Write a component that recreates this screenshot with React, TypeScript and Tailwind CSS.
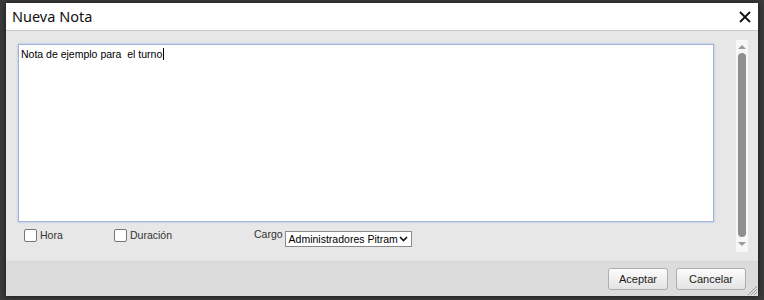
import React from "react";

const font = { fontFamily: "'Liberation Sans', Arial, sans-serif" };

export default function App() {
  return (
    <div className="w-[764px] h-[300px] bg-[#3b3b3b] pt-[3px] pl-[6px] pr-[6px] pb-[4px]">
      <div className="relative flex h-full w-full flex-col shadow-[0_0_6px_rgba(0,0,0,0.6)]">
        {/* Title bar */}
        <div className="flex h-[28px] items-center justify-between border-b border-[#c9c9c9] bg-white pl-[6px] pr-[6px]">
          <span className="text-[14.5px] text-[#111]" style={{ fontFamily: "'Noto Sans', 'Open Sans', sans-serif" }}>
            Nueva Nota
          </span>
          <svg width="12" height="12" viewBox="0 0 12 12" className="mr-[1px]">
            <path d="M1 1 L11 11 M11 1 L1 11" stroke="#111" strokeWidth="1.8" />
          </svg>
        </div>

        {/* Body */}
        <div className="flex flex-1 bg-[#e7e7e7]">
          <div className="flex-1 pl-[12px] pt-[13px]">
            <div
              className="h-[178px] w-[696px] border border-[#9fb3dd] bg-white px-[2px] pt-[3px] text-[10.5px] leading-[13px] text-black shadow-[0_0_2px_rgba(120,150,220,0.6)]"
              style={font}
            >
              <span>Nota de ejemplo para&nbsp; el turno</span>
              <span className="ml-[1px] inline-block h-[12px] w-px bg-black align-[-2px]" />
            </div>
            <div className="mt-[6px] flex items-start pl-[6px] text-[10.5px] leading-[13px] text-[#333]" style={font}>
              <div className="mt-[1px] flex w-[90px] items-center">
                <span className="h-[13px] w-[13px] rounded-[2px] border border-[#767676] bg-white" />
                <span className="ml-[3px]">Hora</span>
              </div>
              <div className="mt-[1px] flex w-[140px] items-center">
                <span className="h-[13px] w-[13px] rounded-[2px] border border-[#767676] bg-white" />
                <span className="ml-[3px]">Duración</span>
              </div>
              <span className="mr-[2px]">Cargo</span>
              <div className="mt-[3px] flex h-[16px] w-[127px] items-center justify-between whitespace-nowrap border border-[#8a8a8a] bg-white pl-[3px] pr-[3px] text-[10.5px] text-black">
                <span>Administradores Pitram</span>
                <svg width="9" height="6" viewBox="0 0 9 6" className="shrink-0">
                  <path d="M1 1 L4.5 4.5 L8 1" stroke="#111" strokeWidth="1.6" fill="none" />
                </svg>
              </div>
            </div>
          </div>
          {/* Scrollbar */}
          <div className="mr-[10px] mt-[9px] mb-[9px] flex w-[12px] flex-col items-center bg-[#f7f7f7]">
            <svg width="8" height="5" viewBox="0 0 8 5" className="mt-[4px]">
              <path d="M0 5 L4 1 L8 5 Z" fill="#9a9a9a" />
            </svg>
            <div className="mt-[4px] w-[8px] flex-1 rounded-full bg-[#8f8f8f]" />
            <svg width="8" height="5" viewBox="0 0 8 5" className="mt-[5px] mb-[5px]">
              <path d="M0 0 L4 4 L8 0 Z" fill="#9a9a9a" />
            </svg>
          </div>
        </div>

        {/* Footer */}
        <div className="flex h-[35px] items-center justify-end gap-[8px] border-t border-[#d6d6d6] bg-[#dcdcdc] pr-[12px]">
          <button
            className="h-[22px] w-[60px] rounded-[3px] border border-[#adadad] bg-gradient-to-b from-[#fcfcfc] to-[#e3e3e3] text-[11px] text-[#1a1a1a]"
            style={font}
          >
            Aceptar
          </button>
          <button
            className="h-[22px] w-[70px] rounded-[3px] border border-[#adadad] bg-gradient-to-b from-[#fcfcfc] to-[#e3e3e3] text-[11px] text-[#1a1a1a]"
            style={font}
          >
            Cancelar
          </button>
        </div>

        {/* Resize grip */}
        <svg width="11" height="11" viewBox="0 0 11 11" className="absolute bottom-0 right-0">
          <path d="M10 1 L1 10 M10 4 L4 10 M10 7 L7 10" stroke="#9a9a9a" strokeWidth="1" />
        </svg>
      </div>
    </div>
  );
}
